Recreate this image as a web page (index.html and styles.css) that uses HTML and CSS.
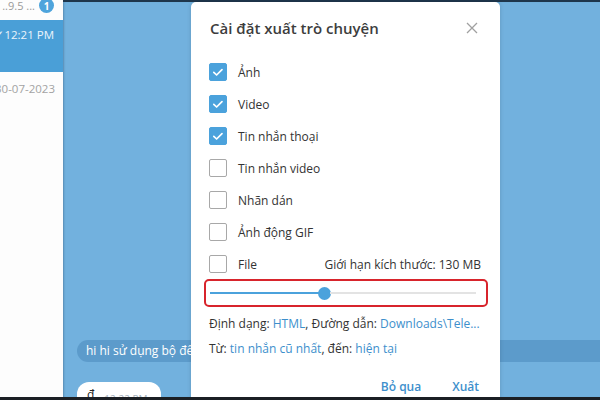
FILE: index.html
```html
<!DOCTYPE html>
<html lang="vi">
<head>
<meta charset="utf-8">
<link rel="stylesheet" href="styles.css">
</head>
<body>
<div class="app">
  <aside class="sidebar">
    <div class="row row-top">
      <span class="preview">..9.5 ...</span>
      <span class="badge">1</span>
    </div>
    <div class="row row-active">
      <span class="time">✓12:21 PM</span>
    </div>
    <div class="row row-date">
      <span class="date">30-07-2023</span>
    </div>
  </aside>
  <main class="chat">
    <div class="messages">
      <div class="service">hi hi sử dụng bộ đếm để tìm kiếm những tin nhắn mới trong cuộc</div>
      <div class="bubble"><span class="bubble-text">đ</span><span class="bubble-time">12:22 PM</span></div>
    </div>
    <div class="dialog">
      <div class="dialog-head">
        <h1 class="dialog-title">Cài đặt xuất trò chuyện</h1>
        <svg class="close" width="12" height="12" viewBox="0 0 12 12"><path d="M1 1L11 11M11 1L1 11" stroke="#a0a0a0" stroke-width="1.3" fill="none"/></svg>
      </div>
      <ul class="options">
        <li class="option"><span class="cb on"><svg viewBox="0 0 18 18"><path d="M4.8 9.4l2.8 2.6 5.4-5.4" stroke="#fff" stroke-width="1.7" fill="none" stroke-linecap="round" stroke-linejoin="round"/></svg></span><span class="label">Ảnh</span></li>
        <li class="option"><span class="cb on"><svg viewBox="0 0 18 18"><path d="M4.8 9.4l2.8 2.6 5.4-5.4" stroke="#fff" stroke-width="1.7" fill="none" stroke-linecap="round" stroke-linejoin="round"/></svg></span><span class="label">Video</span></li>
        <li class="option"><span class="cb on"><svg viewBox="0 0 18 18"><path d="M4.8 9.4l2.8 2.6 5.4-5.4" stroke="#fff" stroke-width="1.7" fill="none" stroke-linecap="round" stroke-linejoin="round"/></svg></span><span class="label">Tin nhắn thoại</span></li>
        <li class="option"><span class="cb"></span><span class="label">Tin nhắn video</span></li>
        <li class="option"><span class="cb"></span><span class="label">Nhãn dán</span></li>
        <li class="option"><span class="cb"></span><span class="label">Ảnh động GIF</span></li>
        <li class="option"><span class="cb"></span><span class="label">File</span><span class="limit">Giới hạn kích thước: 130 MB</span></li>
      </ul>
      <div class="slider-box">
        <div class="slider">
          <div class="track-fill"></div>
          <div class="knob"></div>
          <div class="track-rest"></div>
        </div>
      </div>
      <p class="info">Định dạng: <a>HTML</a>, Đường dẫn: <a>Downloads\Tele...</a></p>
      <p class="info">Từ: <a>tin nhắn cũ nhất</a>, đến: <a>hiện tại</a></p>
      <div class="actions">
        <button class="btn">Bỏ qua</button>
        <button class="btn">Xuất</button>
      </div>
    </div>
  </main>
</div>
<div class="bottom-bar"></div>
</body>
</html>
```
FILE: styles.css
```css
* { box-sizing: border-box; }
html, body { margin: 0; padding: 0; }
body {
  width: 600px;
  height: 400px;
  overflow: hidden;
  font-family: "Open Sans", "Noto Sans", sans-serif;
  background: #fff;
}
.app {
  display: flex;
  height: 397px;
  overflow: hidden;
}
.bottom-bar {
  height: 3px;
  background: #1b1f24;
}
.sidebar {
  width: 63px;
  flex: none;
  background: #fdfdfd;
  display: flex;
  flex-direction: column;
  overflow: hidden;
}
.row {
  display: flex;
  align-items: center;
  justify-content: flex-end;
  padding-right: 9px;
  white-space: nowrap;
}
.row-top {
  margin-top: -9px;
  height: 29px;
  padding-right: 9px;
  gap: 4px;
}
.preview {
  font-size: 11px;
  color: #9a9a9a;
  margin-left: -6px;
}
.badge {
  width: 15px;
  height: 15px;
  border-radius: 50%;
  background: #4ea4dc;
  color: #fff;
  font-size: 10px;
  font-weight: 700;
  display: flex;
  align-items: center;
  justify-content: center;
  flex: none;
}
.row-active {
  height: 52px;
  background: #4a9fd7;
  align-items: flex-start;
  padding-top: 7px;
}
.time {
  color: #eaf4fb;
  font-size: 11.5px;
  margin-left: -4px;
}
.row-date {
  height: 32px;
  padding-right: 8px;
}
.date {
  font-size: 11.5px;
  color: #a3a3a3;
}
.chat {
  flex: 1;
  position: relative;
  background: #72b1de;
  border-top: 2px solid #1e364c;
  box-shadow: inset 2px 0 2px -1px rgba(40, 70, 100, 0.35);
}
.messages {
  display: flex;
  flex-direction: column;
  padding-top: 338px;
  padding-left: 14px;
  gap: 20px;
}
.service {
  background: #5c9bcb;
  color: #fff;
  font-size: 12px;
  white-space: nowrap;
  height: 22px;
  line-height: 21px;
  border-radius: 11px;
  padding: 0 8px 0 9px;
  width: 560px;
}
.bubble {
  background: #fff;
  border-radius: 12px;
  width: 84px;
  height: 30px;
  padding: 6px 10px;
  display: flex;
  align-items: flex-start;
  gap: 10px;
}
.bubble-text { font-size: 12px; color: #222; line-height: 14px; }
.bubble-time { font-size: 10px; color: #a8b3bd; margin-top: 4px; }
.dialog {
  position: absolute;
  left: 128px;
  top: 0;
  width: 309px;
  height: 420px;
  background: #fff;
  border-radius: 5px;
  box-shadow: 0 0 4px rgba(0, 0, 0, 0.15);
  padding: 0 19px 0 18px;
  display: flex;
  flex-direction: column;
}
.dialog-head {
  display: flex;
  justify-content: space-between;
  align-items: center;
  height: 52px;
  padding-left: 1px;
  padding-right: 3px;
}
.dialog-title {
  margin: 0;
  font-size: 15px;
  font-weight: 600;
  color: #3d3d3d;
}
.close { display: block; }
.options {
  list-style: none;
  margin: 0;
  padding: 0;
  margin-top: 2px;
}
.option {
  display: flex;
  align-items: center;
  height: 32px;
}
.cb {
  width: 18px;
  height: 18px;
  border: 1.5px solid #a8a8a8;
  border-radius: 2px;
  flex: none;
  display: flex;
}
.cb.on {
  background: #4ba2dc;
  border-color: #4ba2dc;
}
.cb svg { margin: -1.5px; width: 18px; height: 18px; }
.label {
  margin-left: 11px;
  font-size: 12px;
  color: #333;
}
.limit {
  margin-left: auto;
  font-size: 12px;
  color: #333;
}
.slider-box {
  margin: -1px -7px 0 -5px;
  height: 28px;
  border: 2px solid #d8242c;
  border-radius: 5px;
  display: flex;
  align-items: center;
  padding: 0 10px 0 4px;
}
.slider {
  flex: 1;
  display: flex;
  align-items: center;
}
.track-fill {
  width: 109px;
  height: 2px;
  background: #4ba2dc;
}
.knob {
  width: 13px;
  height: 13px;
  border-radius: 50%;
  background: #4ba2dc;
  margin: 0 -1px;
  flex: none;
}
.track-rest {
  flex: 1;
  height: 2px;
  background: #e3e3e3;
}
.info {
  margin: 0;
  font-size: 12px;
  color: #333;
  white-space: nowrap;
  height: 25px;
  line-height: 25px;
}
.info:first-of-type { margin-top: 4px; }
.info a { color: #3d8fcc; }
.actions {
  display: flex;
  justify-content: flex-end;
  gap: 31px;
  margin-top: 17px;
  padding-right: 2px;
}
.btn {
  border: 0;
  background: none;
  padding: 0;
  font-family: inherit;
  font-size: 12px;
  font-weight: 600;
  color: #3d8fcc;
}
```
